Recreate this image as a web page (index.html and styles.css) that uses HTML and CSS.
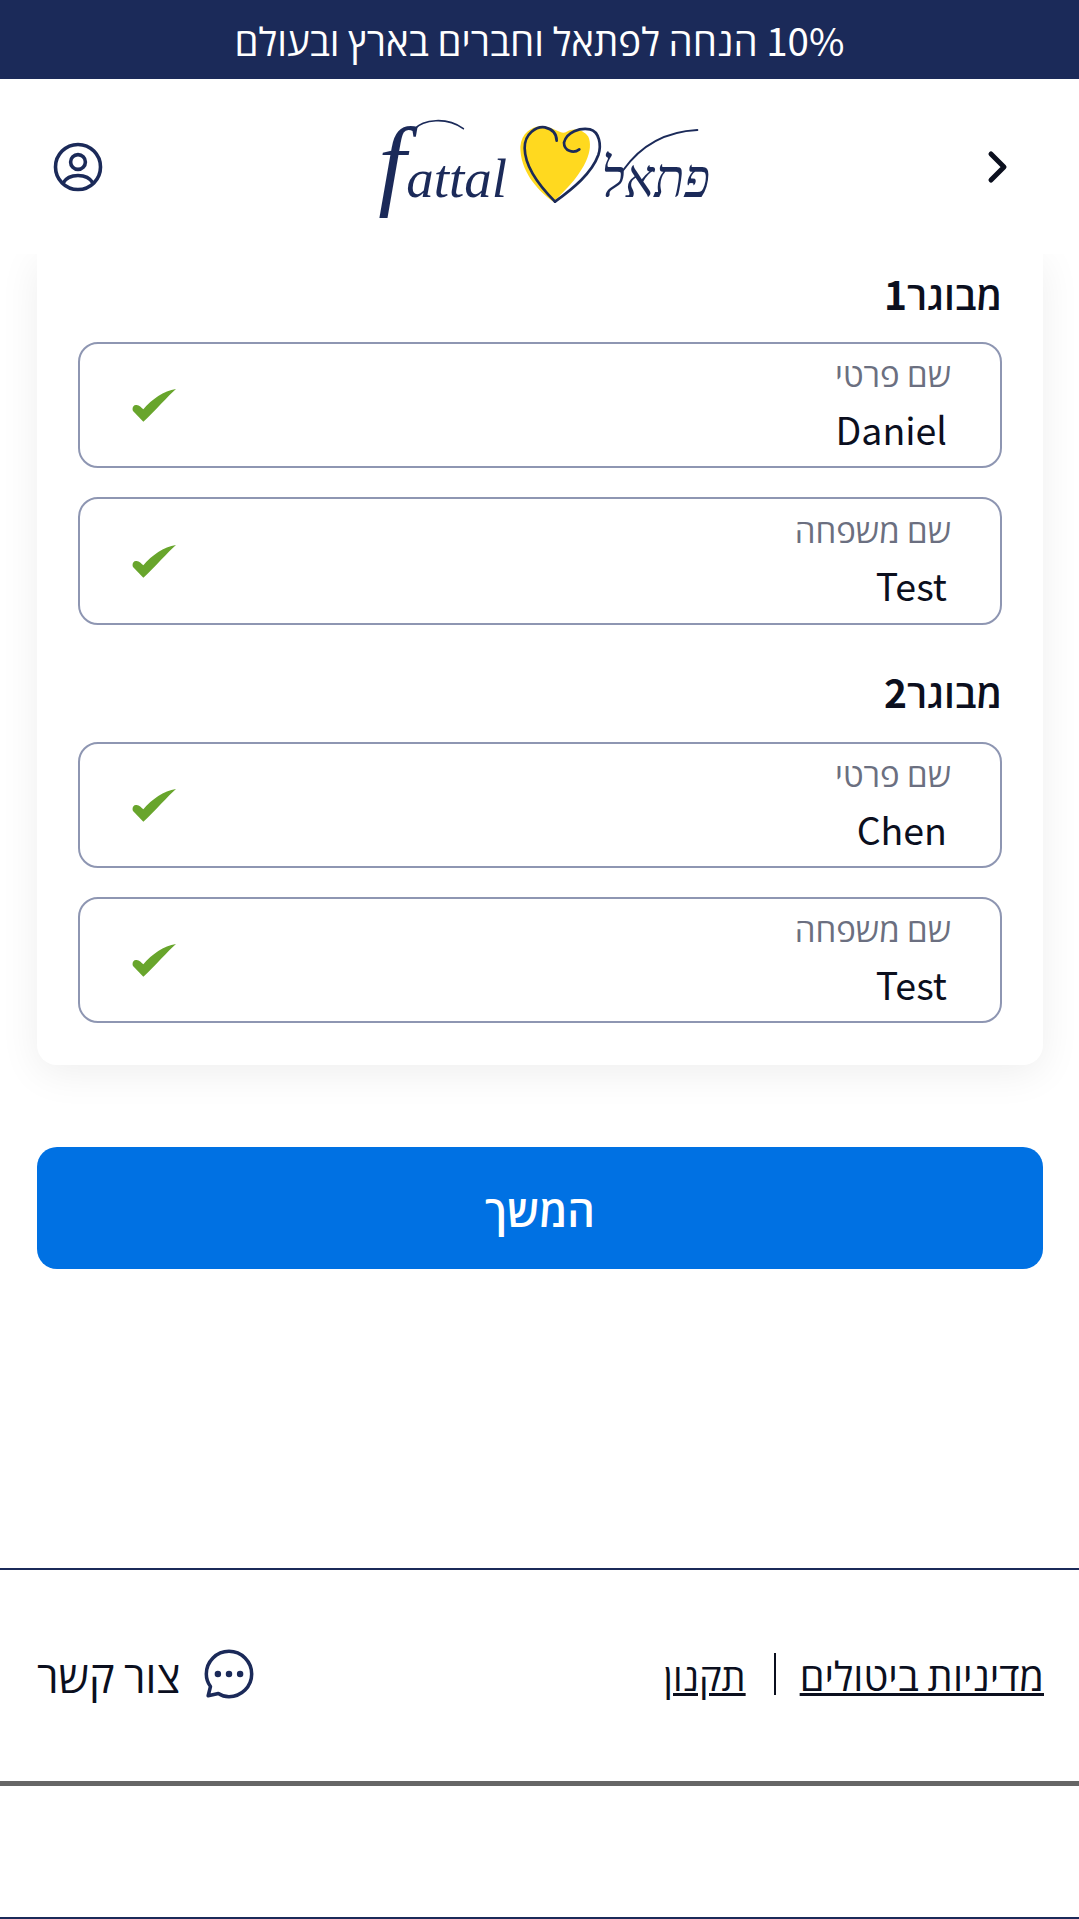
FILE: index.html
```html
<!DOCTYPE html>
<html lang="he" dir="rtl">
<head>
  <meta charset="UTF-8">
  <meta name="viewport" content="width=device-width, initial-scale=1.0">
  <title>פתאל</title>
  <link rel="stylesheet" href="styles.css">
</head>
<body>
  <div class="promo">10% הנחה לפתאל וחברים בארץ ובעולם</div>

  <header class="top-bar">
    <a class="back" href="#">
      <svg width="22" height="34" viewBox="0 0 22 34"><path d="M4 4 L17 17 L4 30" fill="none" stroke="#0b0f1e" stroke-width="5" stroke-linecap="round" stroke-linejoin="round"/></svg>
    </a>
    <svg class="logo" width="400" height="150" viewBox="0 0 1200 450">
      <!-- heart -->
      <path d="M640 335 C590 300 540 240 541 170 C545 120 590 100 625 112 C650 118 665 135 680 125 C700 112 730 118 745 140 C760 175 745 240 640 335 Z" fill="#ffd91f"/>
      <path d="M645 335 C600 290 555 235 554 175 C553 130 590 108 615 112 C640 118 650 135 650 152" fill="none" stroke="#1b2a59" stroke-width="8" stroke-linecap="round"/>
      <path d="M718 178 C700 192 672 182 672 158 C680 125 720 113 750 118 C778 125 785 165 775 195 C755 250 700 295 645 335" fill="none" stroke="#1b2a59" stroke-width="8" stroke-linecap="round"/>
      <!-- wordmark, real text -->
      <text class="logo-latin" x="115" y="322"><tspan class="logo-initial">f</tspan>attal</text>
      <text class="logo-hebrew" x="1110" y="322" textLength="325" lengthAdjust="spacingAndGlyphs">פתאל</text>
      <path d="M222 118 C250 88 320 80 370 116" fill="none" stroke="#1b2a59" stroke-width="5" stroke-linecap="round"/>
      <path d="M850 240 C900 170 970 125 1072 120" fill="none" stroke="#1b2a59" stroke-width="6" stroke-linecap="round"/>
    </svg>
    <a class="account" href="#">
      <svg width="50" height="50" viewBox="0 0 50 50" fill="none" stroke="#1b2a59" stroke-width="3.6">
        <circle cx="25" cy="25" r="22.5"/>
        <circle cx="25" cy="20" r="7.4"/>
        <path d="M10 41 C16 31 34 31 40 41"/>
      </svg>
    </a>
  </header>

  <main class="content">
    <section class="card">
      <h2 class="guest-title">מבוגר1</h2>
      <div class="field">
        <div class="field-text">
          <span class="field-label">שם פרטי</span>
          <span class="field-value" dir="ltr">Daniel</span>
        </div>
        <svg class="check" width="44" height="34" viewBox="0 0 132 100"><path d="M132 2 C108 22 68 70 34 100 L3 68 C-1 60 4 48 14 50 C22 50 28 58 34 63 C60 32 95 8 132 2 Z" fill="#68a52c"/></svg>
      </div>
      <div class="field tall">
        <div class="field-text">
          <span class="field-label">שם משפחה</span>
          <span class="field-value" dir="ltr">Test</span>
        </div>
        <svg class="check" width="44" height="34" viewBox="0 0 132 100"><path d="M132 2 C108 22 68 70 34 100 L3 68 C-1 60 4 48 14 50 C22 50 28 58 34 63 C60 32 95 8 132 2 Z" fill="#68a52c"/></svg>
      </div>

      <h2 class="guest-title second">מבוגר2</h2>
      <div class="field">
        <div class="field-text">
          <span class="field-label">שם פרטי</span>
          <span class="field-value" dir="ltr">Chen</span>
        </div>
        <svg class="check" width="44" height="34" viewBox="0 0 132 100"><path d="M132 2 C108 22 68 70 34 100 L3 68 C-1 60 4 48 14 50 C22 50 28 58 34 63 C60 32 95 8 132 2 Z" fill="#68a52c"/></svg>
      </div>
      <div class="field">
        <div class="field-text">
          <span class="field-label">שם משפחה</span>
          <span class="field-value" dir="ltr">Test</span>
        </div>
        <svg class="check" width="44" height="34" viewBox="0 0 132 100"><path d="M132 2 C108 22 68 70 34 100 L3 68 C-1 60 4 48 14 50 C22 50 28 58 34 63 C60 32 95 8 132 2 Z" fill="#68a52c"/></svg>
      </div>
    </section>

    <button class="continue">המשך</button>
  </main>

  <footer class="site-footer">
    <div class="footer-row">
      <nav class="footer-links">
        <a href="#">מדיניות ביטולים</a>
        <span class="divider"></span>
        <a class="terms" href="#">תקנון</a>
      </nav>
      <a class="contact" href="#">
        <svg width="50" height="50" viewBox="0 0 54 54" fill="none" stroke="#1b2a59" stroke-width="3.8" stroke-linejoin="round">
          <path d="M27 2.5 C40.5 2.5 51.5 13.5 51.5 27 C51.5 40.5 40.5 51.5 27 51.5 C22.5 51.5 18.5 50 15.5 48 L4.5 50.5 L7 40.5 C4 36.5 2.5 32 2.5 27 C2.5 13.5 13.5 2.5 27 2.5 Z"/>
          <circle cx="15" cy="27" r="1.6" fill="#1b2a59"/>
          <circle cx="27" cy="27" r="1.6" fill="#1b2a59"/>
          <circle cx="39" cy="27" r="1.6" fill="#1b2a59"/>
        </svg>
        <span>צור קשר</span>
      </a>
    </div>
    <div class="footer-blank"></div>
  </footer>
</body>
</html>
```

FILE: styles.css
```css
* {
  box-sizing: border-box;
}
body {
  margin: 0;
  height: 1919px;
  overflow: hidden;
  background-color: #fff;
  color: #0b0f1e;
  font-family: "Noto Sans CJK JP", "Open Sans", "Noto Sans", sans-serif;
}
a {
  color: inherit;
}

.promo {
  height: 79px;
  line-height: 79px;
  background-color: #1b2a59;
  color: #fff;
  font-size: 38.5px;
  text-align: center;
}

.top-bar {
  position: relative;
  z-index: 2;
  display: grid;
  grid-template-columns: 1fr auto 1fr;
  align-items: center;
  height: 175px;
  padding: 0 53px;
  background-color: #fff;
}
.back, .account {
  display: flex;
}
.back {
  margin-right: 17px;
}
.account {
  justify-content: flex-end;
}
.logo {
  margin-bottom: 3px;
}
.logo-latin {
  font-family: "Liberation Serif", serif;
  font-style: italic;
  font-size: 165px;
  fill: #1b2a59;
  direction: ltr;
}
.logo-initial {
  font-size: 300px;
}
.logo-hebrew {
  font-family: "Liberation Serif", serif;
  font-style: italic;
  font-size: 165px;
  fill: #1b2a59;
}

.content {
  padding: 0 36px 0 37px;
}
.card {
  padding: 11px 41px 42px 41px;
  background-color: #fff;
  border-radius: 0 0 20px 20px;
  box-shadow: 0 8px 40px rgba(0, 0, 0, 0.07);
}
.guest-title {
  margin: 0 0 21px;
  font-size: 39px;
  font-weight: 600;
  line-height: 56px;
}
.guest-title.second {
  margin: 38px 0 23px;
}
.field {
  display: flex;
  justify-content: space-between;
  align-items: center;
  height: 126px;
  margin-bottom: 29px;
  padding: 0 49px 0 52px;
  border: 2px solid #8e96b2;
  border-radius: 20px;
}
.field.tall {
  height: 128px;
}
.field:last-child {
  margin-bottom: 0;
}
.field-text {
  display: flex;
  flex-direction: column;
}
.field-label {
  margin: -3px 0 3px;
  color: #6b6f80;
  font-size: 33px;
  line-height: 48px;
}
.field-value {
  padding-right: 4px;
  font-size: 37.5px;
  line-height: 58px;
  text-align: right;
}

.continue {
  display: block;
  width: 100%;
  height: 122px;
  margin-top: 82px;
  border: none;
  border-radius: 20px;
  background-color: #0071e3;
  color: #fff;
  font-family: inherit;
  font-size: 43px;
  font-weight: 600;
}

.site-footer {
  margin-top: 299px;
  border-top: 2px solid #1b2a59;
}
.footer-row {
  display: flex;
  justify-content: space-between;
  align-items: center;
  height: 216px;
  padding: 0 35px 3px 37px;
  border-bottom: 5px solid #666;
}
.footer-links {
  display: flex;
  align-items: center;
  gap: 24px;
  font-size: 39.8px;
}
.terms {
  font-size: 38px;
}
.divider {
  width: 2px;
  height: 42px;
  margin-left: 4px;
  background-color: #0b0f1e;
}
.contact {
  display: flex;
  align-items: center;
  gap: 24px;
  font-size: 43px;
  text-decoration: none;
}
.footer-blank {
  height: 133px;
  border-bottom: 2px solid #1b2a59;
}
```
